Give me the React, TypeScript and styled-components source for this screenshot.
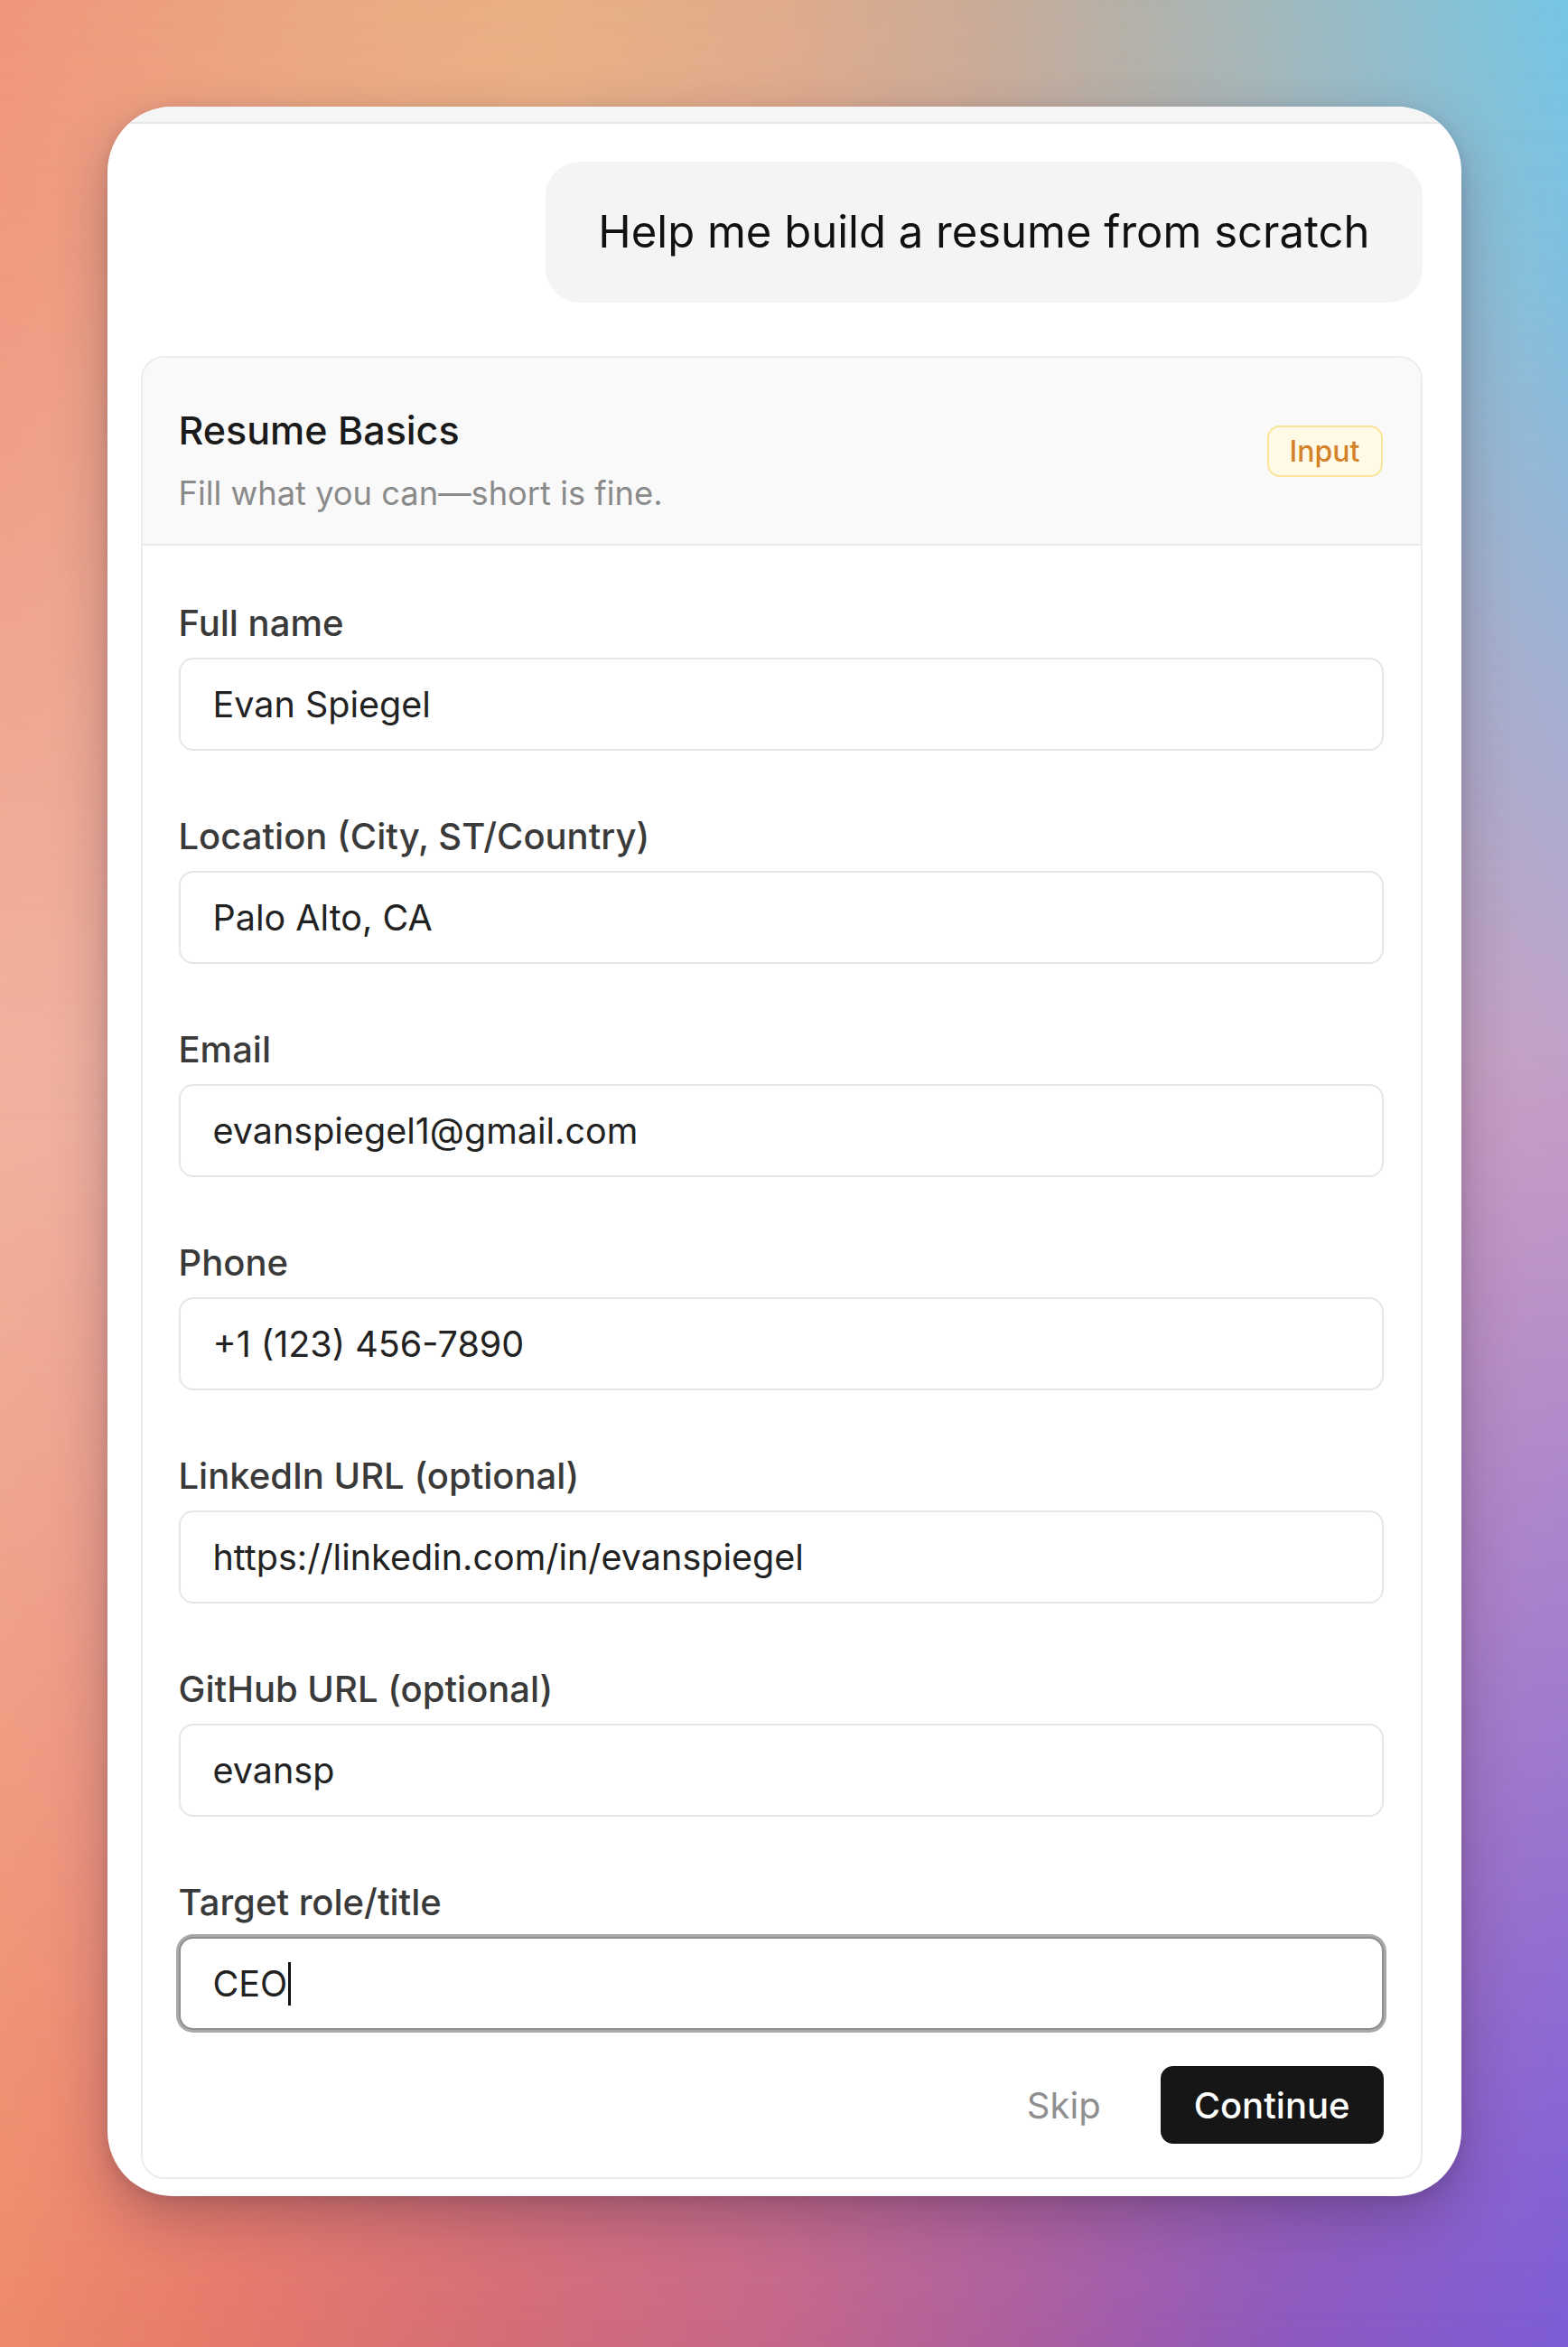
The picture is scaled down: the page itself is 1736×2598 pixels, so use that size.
import React from "react";
import styled, { createGlobalStyle } from "styled-components";

const GlobalStyle = createGlobalStyle`
  html, body { margin: 0; padding: 0; }
  body {
    font-family: Inter, "Noto Sans", "Liberation Sans", sans-serif;
    -webkit-font-smoothing: antialiased;
  }
  * { box-sizing: border-box; }
`;

const Page = styled.div`
  position: relative;
  min-height: 2598px;
  padding: 118px 118px 168px;
  display: flex;
  flex-direction: column;
  align-items: center;
  background: linear-gradient(
    to right,
    #f2b4a2 0%,
    #eab0a8 30%,
    #dca8b4 60%,
    #c89fc6 100%
  );
  overflow: hidden;

  &::before,
  &::after {
    content: "";
    position: absolute;
    inset: 0;
    pointer-events: none;
  }
  &::before {
    background: linear-gradient(
      to right,
      #ef967c 0%,
      #eba882 20%,
      #e9b085 35%,
      #dfab8b 50%,
      #cbab97 62%,
      #b4b1a8 72%,
      #97bcc6 86%,
      #74c6e4 100%
    );
    -webkit-mask-image: linear-gradient(to bottom, #000 0%, rgba(0,0,0,0.85) 12%, transparent 48%);
    mask-image: linear-gradient(to bottom, #000 0%, rgba(0,0,0,0.85) 12%, transparent 48%);
  }
  &::after {
    background: linear-gradient(
      to right,
      #ee8a6a 0%,
      #e6786a 15%,
      #d46c76 32%,
      #c4668a 50%,
      #ac5e9e 65%,
      #8d58be 82%,
      #7c5cd6 100%
    );
    -webkit-mask-image: linear-gradient(to top, #000 0%, rgba(0,0,0,0.85) 10%, transparent 55%);
    mask-image: linear-gradient(to top, #000 0%, rgba(0,0,0,0.85) 10%, transparent 55%);
  }
`;

const Card = styled.div`
  position: relative;
  z-index: 1;
  width: 1499px;
  background: #ffffff;
  border-radius: 72px;
  overflow: hidden;
  box-shadow: 0 24px 60px rgba(40, 20, 50, 0.28), 0 4px 14px rgba(40, 20, 50, 0.12);
`;

const TopStrip = styled.div`
  height: 19px;
  background: #f5f5f5;
  border-bottom: 2px solid #e8e8e8;
`;

const Content = styled.div`
  display: flex;
  flex-direction: column;
  gap: 59px;
  padding: 42px 43px 19px 37px;
`;

const BubbleRow = styled.div`
  display: flex;
  justify-content: flex-end;
`;

const Bubble = styled.div`
  background: #f4f4f4;
  border-radius: 38px;
  padding: 48px 58px;
  font-size: 49px;
  line-height: 60px;
  color: #111111;
  font-weight: 400;
`;

const FormCard = styled.section`
  border: 2px solid #ececec;
  border-radius: 26px;
  overflow: hidden;
  background: #ffffff;
`;

const Header = styled.header`
  display: flex;
  justify-content: space-between;
  align-items: flex-start;
  background: #f9f9f9;
  border-bottom: 2px solid #ebebeb;
  padding: 54px 42px 34px 40px;
`;

const HeaderText = styled.div`
  display: flex;
  flex-direction: column;
  gap: 22px;
`;

const Title = styled.h2`
  margin: 0;
  font-size: 43px;
  line-height: 52px;
  font-weight: 500;
  color: #1a1a1a;
`;

const Subtitle = styled.p`
  margin: 0;
  font-size: 36.3px;
  line-height: 44px;
  color: #8a8a8a;
  font-weight: 400;
`;

const Badge = styled.span`
  margin-top: 21px;
  display: inline-flex;
  align-items: center;
  height: 57px;
  padding: 0 23px;
  border-radius: 14px;
  background: #fffae6;
  border: 2px solid #fbe49a;
  color: #d4822a;
  font-size: 32px;
  font-weight: 500;
`;

const Body = styled.div`
  display: flex;
  flex-direction: column;
  gap: 72px;
  padding: 63px 41px 37px 40px;
`;

const Field = styled.div`
  display: flex;
  flex-direction: column;
  gap: 15px;
`;

const Label = styled.label`
  font-size: 40px;
  line-height: 46px;
  font-weight: 500;
  color: #3a3a3a;
`;

const InputBox = styled.div<{ $focused?: boolean }>`
  height: 103px;
  display: flex;
  align-items: center;
  padding: 0 36px;
  border-radius: 16px;
  border: 2px solid ${(p) => (p.$focused ? "#8e8e8e" : "#e6e6e6")};
  box-shadow: ${(p) => (p.$focused ? "0 0 0 3px #a9a9a9" : "none")};
  font-size: 39.5px;
  color: #222222;
  background: #ffffff;
`;

const Caret = styled.span`
  display: inline-block;
  width: 3px;
  height: 48px;
  background: #111;
  margin-left: 1px;
`;

const Actions = styled.div`
  display: flex;
  justify-content: flex-end;
  align-items: center;
  margin-top: -32px;
`;

const SkipButton = styled.button`
  border: none;
  background: transparent;
  font-family: inherit;
  font-size: 40px;
  color: #8f8f8f;
  padding: 0;
  height: 86px;
  cursor: pointer;
  margin-right: 66px;
`;

const ContinueButton = styled.button`
  border: none;
  background: #161616;
  color: #ffffff;
  font-family: inherit;
  font-size: 40px;
  font-weight: 500;
  height: 86px;
  padding: 0 37px;
  border-radius: 14px;
  cursor: pointer;
`;

const fields = [
  { label: "Full name", value: "Evan Spiegel" },
  { label: "Location (City, ST/Country)", value: "Palo Alto, CA" },
  { label: "Email", value: "evanspiegel1@gmail.com" },
  { label: "Phone", value: "+1 (123) 456-7890" },
  { label: "LinkedIn URL (optional)", value: "https://linkedin.com/in/evanspiegel" },
  { label: "GitHub URL (optional)", value: "evansp" },
  { label: "Target role/title", value: "CEO", focused: true },
];

export default function App() {
  return (
    <>
      <GlobalStyle />
      <Page>
        <Card>
          <TopStrip />
          <Content>
            <BubbleRow>
              <Bubble>Help me build a resume from scratch</Bubble>
            </BubbleRow>
            <FormCard>
              <Header>
                <HeaderText>
                  <Title>Resume Basics</Title>
                  <Subtitle>Fill what you can—short is fine.</Subtitle>
                </HeaderText>
                <Badge>Input</Badge>
              </Header>
              <Body>
                {fields.map((f) => (
                  <Field key={f.label}>
                    <Label>{f.label}</Label>
                    <InputBox $focused={f.focused}>
                      {f.value}
                      {f.focused && <Caret />}
                    </InputBox>
                  </Field>
                ))}
                <Actions>
                  <SkipButton>Skip</SkipButton>
                  <ContinueButton>Continue</ContinueButton>
                </Actions>
              </Body>
            </FormCard>
          </Content>
        </Card>
      </Page>
    </>
  );
}
